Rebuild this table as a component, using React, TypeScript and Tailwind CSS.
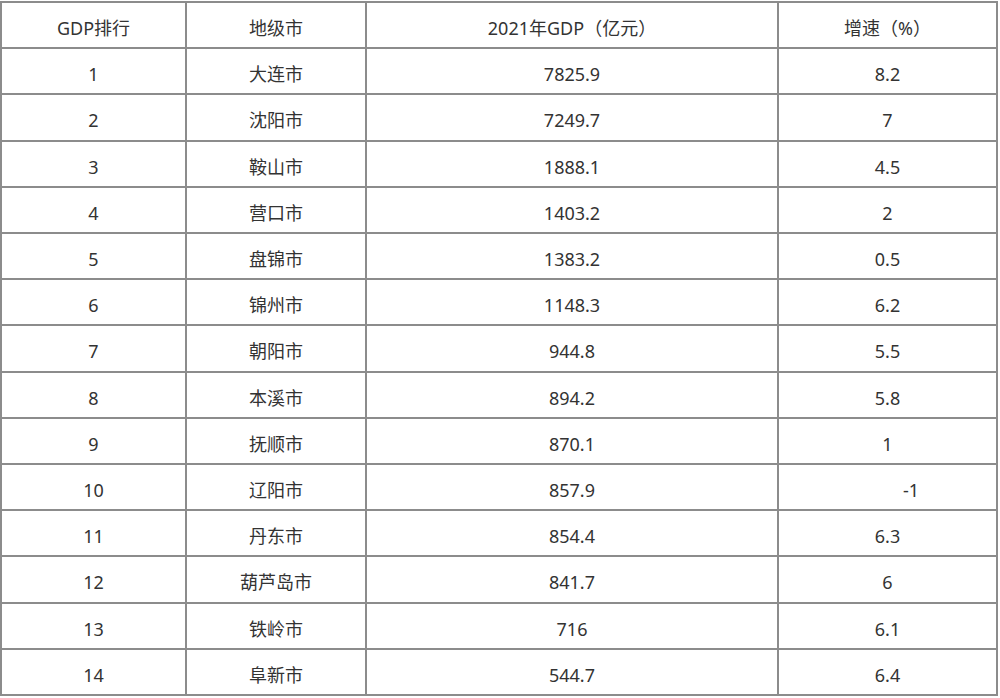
const rows: [string, string, string, string][] = [
  ["1", "大连市", "7825.9", "8.2"],
  ["2", "沈阳市", "7249.7", "7"],
  ["3", "鞍山市", "1888.1", "4.5"],
  ["4", "营口市", "1403.2", "2"],
  ["5", "盘锦市", "1383.2", "0.5"],
  ["6", "锦州市", "1148.3", "6.2"],
  ["7", "朝阳市", "944.8", "5.5"],
  ["8", "本溪市", "894.2", "5.8"],
  ["9", "抚顺市", "870.1", "1"],
  ["10", "辽阳市", "857.9", "-1"],
  ["11", "丹东市", "854.4", "6.3"],
  ["12", "葫芦岛市", "841.7", "6"],
  ["13", "铁岭市", "716", "6.1"],
  ["14", "阜新市", "544.7", "6.4"],
];

function Cell({
  children,
  className = "",
}: {
  children: React.ReactNode;
  className?: string;
}) {
  return (
    <div
      className={`flex items-center justify-center bg-white pt-[6px] ${className}`}
    >
      {children}
    </div>
  );
}

export default function App() {
  return (
    <div className="min-h-[698px] w-[1000px] bg-white">
      <div
        className="mt-px grid h-[695px] w-[998px] grid-cols-[183px_178px_410px_217px] grid-rows-[repeat(15,minmax(0,1fr))] gap-[2px] bg-[#8c8c8c] p-[2px] text-[18px] leading-none text-[#333]"
        style={{ fontFamily: '"Noto Sans", "Noto Sans CJK SC", sans-serif' }}
      >
        <Cell>GDP排行</Cell>
        <Cell>地级市</Cell>
        <Cell>2021年GDP（亿元）</Cell>
        <Cell>增速（%）</Cell>
        {rows.map(([rank, city, gdp, growth]) => (
          <>
            <Cell key={rank + "a"}>{rank}</Cell>
            <Cell key={rank + "b"}>{city}</Cell>
            <Cell key={rank + "c"}>{gdp}</Cell>
            <Cell key={rank + "d"} className={growth === "-1" ? "pl-[47px]" : ""}>
              {growth}
            </Cell>
          </>
        ))}
      </div>
    </div>
  );
}
